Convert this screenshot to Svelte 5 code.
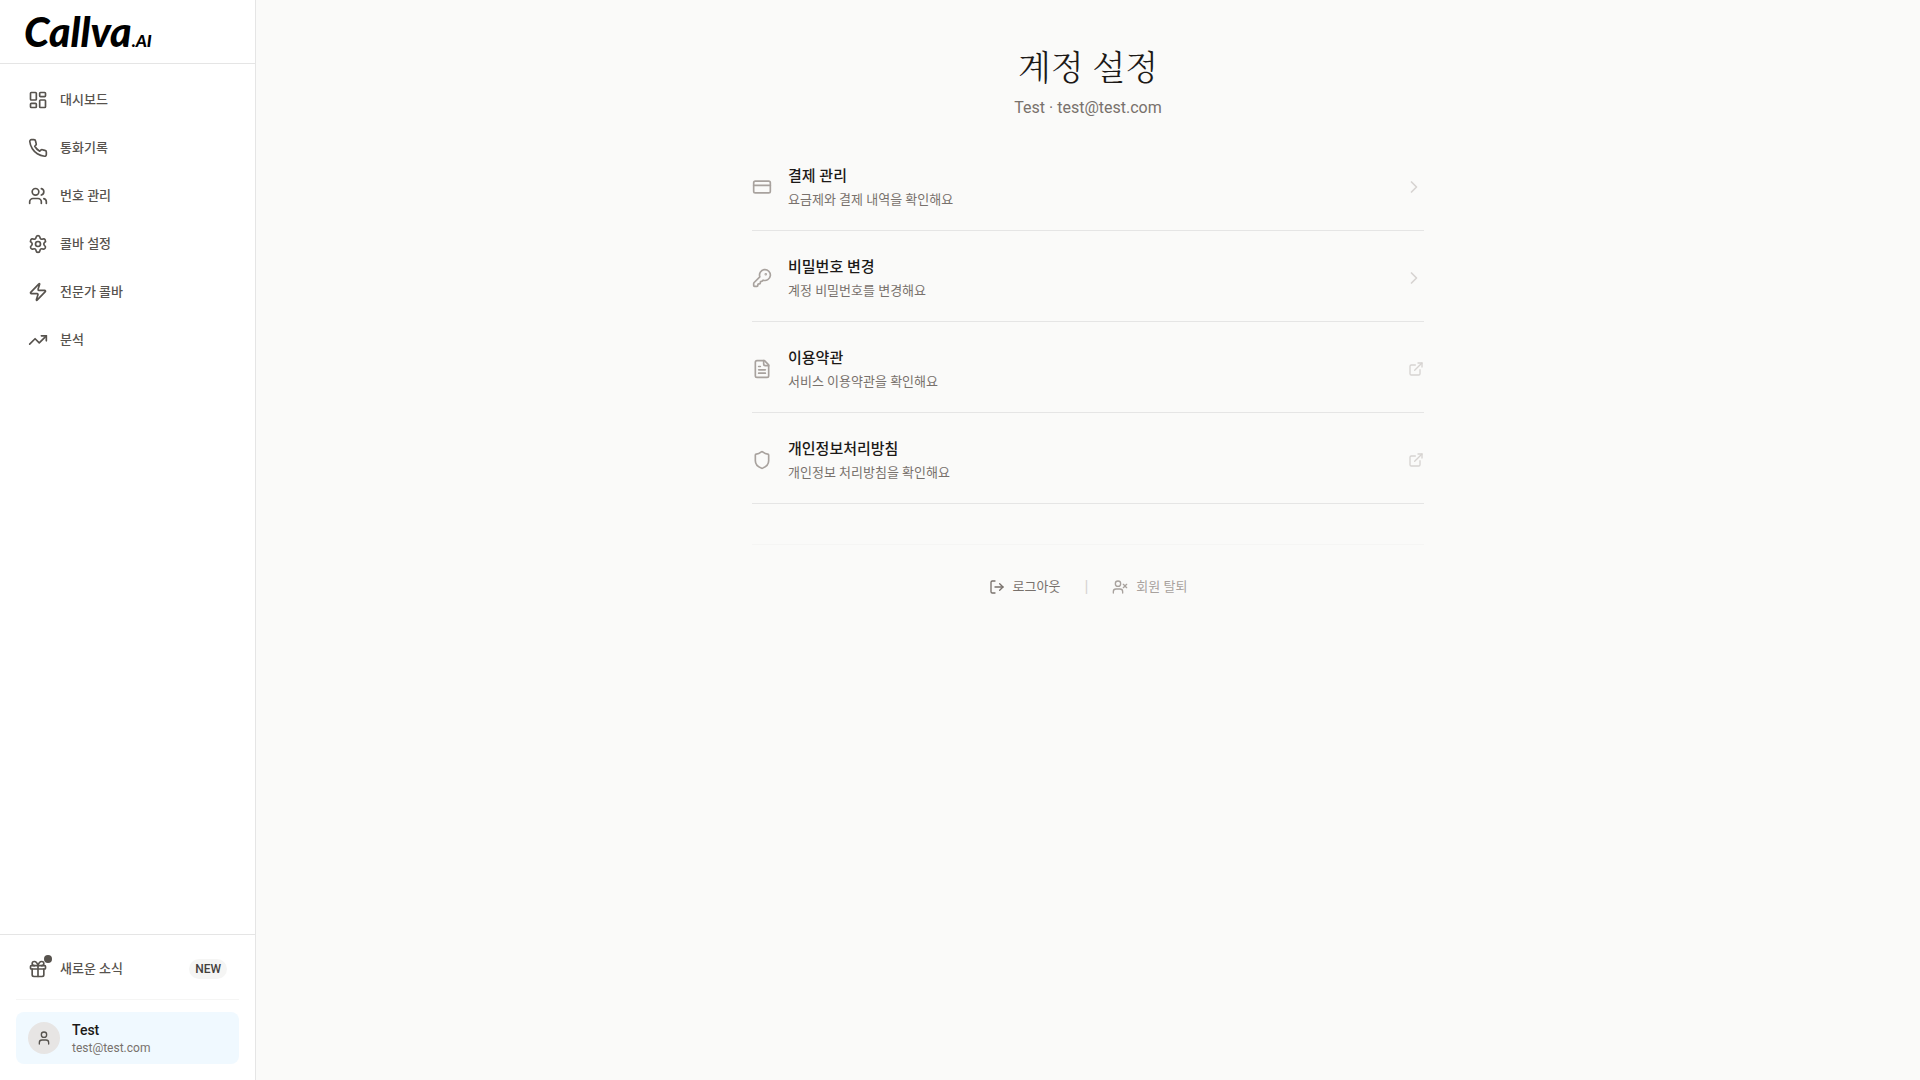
<script lang="ts">
	type IconName =
		| 'dashboard'
		| 'phone'
		| 'users'
		| 'settings'
		| 'zap'
		| 'trending'
		| 'card'
		| 'key'
		| 'file'
		| 'shield';

	interface NavItem {
		label: string;
		icon: IconName;
	}

	interface SettingRow {
		title: string;
		description: string;
		icon: IconName;
		external?: boolean;
	}

	const user = { name: 'Test', email: 'test@test.com' };

	const navItems: NavItem[] = [
		{ label: '대시보드', icon: 'dashboard' },
		{ label: '통화기록', icon: 'phone' },
		{ label: '번호 관리', icon: 'users' },
		{ label: '콜바 설정', icon: 'settings' },
		{ label: '전문가 콜바', icon: 'zap' },
		{ label: '분석', icon: 'trending' }
	];

	const rows: SettingRow[] = [
		{ title: '결제 관리', description: '요금제와 결제 내역을 확인해요', icon: 'card' },
		{ title: '비밀번호 변경', description: '계정 비밀번호를 변경해요', icon: 'key' },
		{ title: '이용약관', description: '서비스 이용약관을 확인해요', icon: 'file', external: true },
		{
			title: '개인정보처리방침',
			description: '개인정보 처리방침을 확인해요',
			icon: 'shield',
			external: true
		}
	];
</script>

{#snippet icon(name: IconName)}
	<svg class="icon" viewBox="0 0 24 24" aria-hidden="true">
		{#if name === 'dashboard'}
			<rect width="7" height="9" x="3" y="3" rx="1" />
			<rect width="7" height="5" x="14" y="3" rx="1" />
			<rect width="7" height="9" x="14" y="12" rx="1" />
			<rect width="7" height="5" x="3" y="16" rx="1" />
		{:else if name === 'phone'}
			<path d="M22 16.92v3a2 2 0 0 1-2.18 2 19.79 19.79 0 0 1-8.63-3.07 19.5 19.5 0 0 1-6-6 19.79 19.79 0 0 1-3.07-8.67A2 2 0 0 1 4.11 2h3a2 2 0 0 1 2 1.72 12.84 12.84 0 0 0 .7 2.81 2 2 0 0 1-.45 2.11L8.09 9.91a16 16 0 0 0 6 6l1.27-1.27a2 2 0 0 1 2.11-.45 12.84 12.84 0 0 0 2.81.7A2 2 0 0 1 22 16.92z" />
		{:else if name === 'users'}
			<path d="M16 21v-2a4 4 0 0 0-4-4H6a4 4 0 0 0-4 4v2" />
			<circle cx="9" cy="7" r="4" />
			<path d="M22 21v-2a4 4 0 0 0-3-3.87" />
			<path d="M16 3.13a4 4 0 0 1 0 7.75" />
		{:else if name === 'settings'}
			<path d="M9.671 4.136a2.34 2.34 0 0 1 4.659 0 2.34 2.34 0 0 0 3.319 1.915 2.34 2.34 0 0 1 2.33 4.033 2.34 2.34 0 0 0 0 3.831 2.34 2.34 0 0 1-2.33 4.033 2.34 2.34 0 0 0-3.319 1.915 2.34 2.34 0 0 1-4.659 0 2.34 2.34 0 0 0-3.32-1.915 2.34 2.34 0 0 1-2.33-4.033 2.34 2.34 0 0 0 0-3.831A2.34 2.34 0 0 1 6.35 6.051a2.34 2.34 0 0 0 3.319-1.915" />
			<circle cx="12" cy="12" r="3" />
		{:else if name === 'zap'}
			<path d="M4 14a1 1 0 0 1-.78-1.63l9.9-10.2a.5.5 0 0 1 .86.46l-1.92 6.02A1 1 0 0 0 13 10h7a1 1 0 0 1 .78 1.63l-9.9 10.2a.5.5 0 0 1-.86-.46l1.92-6.02A1 1 0 0 0 11 14z" />
		{:else if name === 'trending'}
			<path d="M16 7h6v6" />
			<path d="m22 7-8.5 8.5-5-5L2 17" />
		{:else if name === 'card'}
			<rect width="20" height="14" x="2" y="5" rx="2" />
			<path d="M2 10h20" />
		{:else if name === 'key'}
			<path d="M2.586 17.414A2 2 0 0 0 2 18.828V21a1 1 0 0 0 1 1h3a1 1 0 0 0 1-1v-1a1 1 0 0 1 1-1h1a1 1 0 0 0 1-1v-1a1 1 0 0 1 1-1h.172a2 2 0 0 0 1.414-.586l.814-.814a6.5 6.5 0 1 0-4-4z" />
			<circle cx="16.5" cy="7.5" r=".5" fill="currentColor" />
		{:else if name === 'file'}
			<path d="M15 2H6a2 2 0 0 0-2 2v16a2 2 0 0 0 2 2h12a2 2 0 0 0 2-2V7Z" />
			<path d="M14 2v4a2 2 0 0 0 2 2h4" />
			<path d="M10 9H8" />
			<path d="M16 13H8" />
			<path d="M16 17H8" />
		{:else if name === 'shield'}
			<path d="M20 13c0 5-3.5 7.5-7.66 8.95a1 1 0 0 1-.67-.01C7.5 20.5 4 18 4 13V6a1 1 0 0 1 1-1c2 0 4.5-1.2 6.24-2.72a1.17 1.17 0 0 1 1.52 0C14.51 3.81 17 5 19 5a1 1 0 0 1 1 1z" />
		{/if}
	</svg>
{/snippet}

<div class="layout">
	<aside class="sidebar">
		<a class="brand" href="#home">Callva<span class="brand-suffix">.AI</span></a>

		<nav class="nav">
			{#each navItems as item (item.label)}
				<a class="nav-item" href="#{item.icon}">
					{@render icon(item.icon)}
					<span>{item.label}</span>
				</a>
			{/each}
		</nav>

		<div class="sidebar-footer">
			<button type="button" class="nav-item news">
				<span class="news-icon">
					<svg class="icon" viewBox="0 0 24 24" aria-hidden="true">
						<rect x="3" y="8" width="18" height="4" rx="1" />
						<path d="M12 8v13" />
						<path d="M19 12v7a2 2 0 0 1-2 2H7a2 2 0 0 1-2-2v-7" />
						<path d="M7.5 8a2.5 2.5 0 0 1 0-5A4.8 8 0 0 1 12 8a4.8 8 0 0 1 4.5-5 2.5 2.5 0 0 1 0 5" />
					</svg>
					<span class="news-dot"></span>
				</span>
				<span>새로운 소식</span>
				<span class="badge">NEW</span>
			</button>

			<div class="account">
				<a class="user-card" href="#account">
					<span class="avatar">
						<svg class="icon small" viewBox="0 0 24 24" aria-hidden="true">
							<path d="M19 21v-2a4 4 0 0 0-4-4H9a4 4 0 0 0-4 4v2" />
							<circle cx="12" cy="7" r="4" />
						</svg>
					</span>
					<span class="user-text">
						<span class="user-name">{user.name}</span>
						<span class="user-email">{user.email}</span>
					</span>
				</a>
			</div>
		</div>
	</aside>

	<main class="main">
		<div class="content">
			<header class="page-header">
				<h1>계정 설정</h1>
				<p>{user.name} · {user.email}</p>
			</header>

			<div class="rows">
				{#each rows as row (row.title)}
					<a class="row" href="#{row.icon}">
						{@render icon(row.icon)}
						<span class="row-text">
							<span class="row-title">{row.title}</span>
							<span class="row-description">{row.description}</span>
						</span>
						{#if row.external}
							<svg class="icon small trail" viewBox="0 0 24 24" aria-hidden="true">
								<path d="M15 3h6v6" />
								<path d="M10 14 21 3" />
								<path d="M18 13v6a2 2 0 0 1-2 2H5a2 2 0 0 1-2-2V8a2 2 0 0 1 2-2h6" />
							</svg>
						{:else}
							<svg class="icon trail" viewBox="0 0 24 24" aria-hidden="true">
								<path d="m9 18 6-6-6-6" />
							</svg>
						{/if}
					</a>
				{/each}
			</div>

			<div class="actions">
				<button type="button" class="action">
					<svg class="icon small" viewBox="0 0 24 24" aria-hidden="true">
						<path d="M9 21H5a2 2 0 0 1-2-2V5a2 2 0 0 1 2-2h4" />
						<path d="m16 17 5-5-5-5" />
						<path d="M21 12H9" />
					</svg>
					로그아웃
				</button>
				<span class="divider">|</span>
				<button type="button" class="action muted">
					<svg class="icon small" viewBox="0 0 24 24" aria-hidden="true">
						<path d="M16 21v-2a4 4 0 0 0-4-4H6a4 4 0 0 0-4 4v2" />
						<circle cx="9" cy="7" r="4" />
						<path d="m17 8 5 5" />
						<path d="m22 8-5 5" />
					</svg>
					회원 탈퇴
				</button>
			</div>
		</div>
	</main>
</div>

<style>
	:global(body) {
		background-color: #fafaf9;
	}

	.layout {
		display: flex;
		min-height: 100vh;
		font-family: Roboto, 'Noto Sans CJK KR', sans-serif;
		font-size: 13px;
		line-height: 20px;
		color: #1c1917;
	}

	a {
		color: inherit;
		text-decoration: none;
	}

	button {
		padding: 0;
		border: 0;
		background: none;
		font: inherit;
		color: inherit;
		cursor: pointer;
	}

	.icon {
		display: block;
		flex-shrink: 0;
		width: 20px;
		height: 20px;
		fill: none;
		stroke: currentColor;
		stroke-width: 2;
		stroke-linecap: round;
		stroke-linejoin: round;
	}

	.icon.small {
		width: 16px;
		height: 16px;
	}

	.sidebar {
		display: flex;
		flex-direction: column;
		flex-shrink: 0;
		box-sizing: border-box;
		width: 256px;
		border-right: 1px solid #e5e5e5;
		background-color: #fff;
	}

	.brand {
		box-sizing: border-box;
		height: 64px;
		padding: 0 24px;
		border-bottom: 1px solid #e5e5e5;
		font-family: Lato, sans-serif;
		font-size: 41px;
		font-style: italic;
		font-weight: 900;
		line-height: 64px;
		color: #000;
	}

	.brand-suffix {
		font-size: 17px;
	}

	.nav {
		display: flex;
		flex: 1;
		flex-direction: column;
		gap: 8px;
		padding: 16px;
	}

	.nav-item {
		display: flex;
		align-items: center;
		gap: 12px;
		padding: 10px 12px;
		border-radius: 8px;
		font-weight: 500;
		color: #57534e;
	}

	.sidebar-footer {
		padding: 16px;
		border-top: 1px solid #e5e5e5;
	}

	.news {
		width: 100%;
		padding: 8px 12px;
		text-align: left;
	}

	.news-icon {
		position: relative;
	}

	.news-dot {
		position: absolute;
		top: -4px;
		right: -4px;
		width: 8px;
		height: 8px;
		border-radius: 50%;
		background-color: #57534e;
	}

	.badge {
		margin-left: auto;
		padding: 0 6px;
		border-radius: 10px;
		background-color: #f5f5f4;
		font-size: 12px;
		color: #44403c;
	}

	.account {
		margin-top: 12px;
		padding-top: 12px;
		border-top: 1px solid #f5f5f4;
	}

	.user-card {
		display: flex;
		align-items: center;
		gap: 12px;
		padding: 8px 12px;
		border-radius: 8px;
		background-color: #f0f9ff;
	}

	.avatar {
		display: flex;
		align-items: center;
		justify-content: center;
		width: 32px;
		height: 32px;
		border-radius: 50%;
		background-color: #e7e5e4;
		color: #57534e;
	}

	.user-text {
		display: flex;
		flex-direction: column;
	}

	.user-name {
		font-size: 14px;
		font-weight: 500;
	}

	.user-email {
		font-size: 12px;
		line-height: 16px;
		color: #78716c;
	}

	.main {
		flex: 1;
		padding: 40px 24px;
	}

	.content {
		max-width: 672px;
		margin: 0 auto;
	}

	.page-header {
		margin-bottom: 20px;
		text-align: center;
	}

	h1 {
		margin: 0;
		font-family: 'Noto Serif CJK KR', 'Noto Serif KR', serif;
		font-size: 34px;
		font-weight: 300;
		line-height: 52px;
	}

	.page-header p {
		margin: 4px 0 0;
		font-size: 16px;
		line-height: 24px;
		color: #78716c;
	}

	.row {
		display: flex;
		align-items: center;
		gap: 16px;
		padding: 24px 0 20px;
		border-bottom: 1px solid #e5e5e5;
		color: #a8a29e;
	}

	.row-text {
		display: flex;
		flex: 1;
		flex-direction: column;
		gap: 2px;
	}

	.row-title {
		font-size: 15px;
		font-weight: 500;
		line-height: 24px;
		color: #1c1917;
	}

	.row-description {
		color: #78716c;
	}

	.trail {
		color: #d6d3d1;
	}

	.actions {
		display: flex;
		align-items: center;
		justify-content: center;
		gap: 24px;
		margin-top: 40px;
		padding-top: 32px;
		border-top: 1px solid #f5f5f4;
	}

	.action {
		display: flex;
		align-items: center;
		gap: 8px;
		color: #78716c;
	}

	.action.muted {
		color: #a8a29e;
	}

	.divider {
		font-size: 16px;
		color: #d6d3d1;
	}
</style>
